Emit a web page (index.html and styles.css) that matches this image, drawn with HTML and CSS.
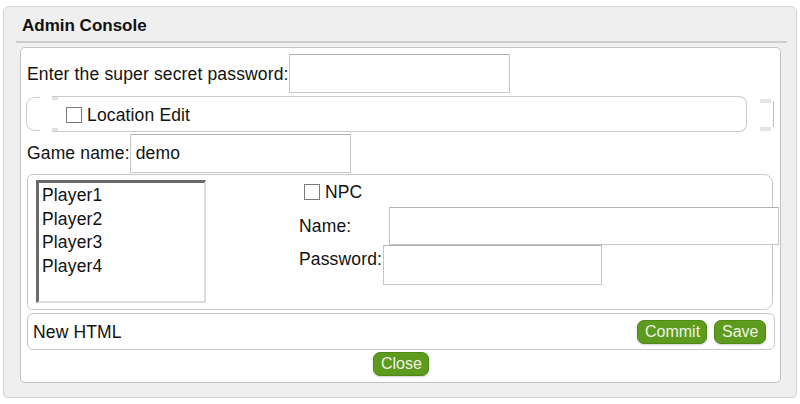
FILE: index.html
```html
<!DOCTYPE html>
<html>
<head>
<meta charset="utf-8">
<link rel="stylesheet" href="styles.css">
</head>
<body>
<div class="panel">
  <div class="panel-head">Admin Console</div>
  <div class="panel-body">
    <div class="row row-pass">
      <span class="label">Enter the super secret password:</span>
      <input class="field field-pass" type="password">
    </div>
    <div class="row row-loc">
      <div class="loc-bracket"></div>
      <div class="loc-box">
        <input class="check" type="checkbox">
        <span class="label">Location Edit</span>
      </div>
      <div class="loc-tail"></div>
    </div>
    <div class="row row-game">
      <span class="label">Game name:</span>
      <input class="field field-game" type="text" value="demo">
    </div>
    <div class="players">
      <div class="listbox">
        <div class="item">Player1</div>
        <div class="item">Player2</div>
        <div class="item">Player3</div>
        <div class="item">Player4</div>
      </div>
      <div class="player-form">
        <div class="npc-row">
          <input class="check" type="checkbox">
          <span class="label">NPC</span>
        </div>
        <div class="form-row form-name">
          <span class="label">Name:</span>
          <input class="field field-name" type="text">
        </div>
        <div class="form-row form-pw">
          <span class="label">Password:</span>
          <input class="field field-pw" type="password">
        </div>
      </div>
    </div>
    <div class="html-bar">
      <span class="label">New HTML</span>
      <div class="bar-buttons">
        <button class="btn btn-commit">Commit</button>
        <button class="btn btn-save">Save</button>
      </div>
    </div>
    <div class="close-row">
      <button class="btn btn-close">Close</button>
    </div>
  </div>
</div>
</body>
</html>
```

FILE: styles.css
```css
* { box-sizing: border-box; }

html, body {
  margin: 0;
  padding: 0;
  background: #ffffff;
}

body {
  font-family: "Liberation Sans", Arial, sans-serif;
  font-size: 17.5px;
  letter-spacing: 0.15px;
  color: #111;
}

.panel {
  margin: 6px 3px 0 3px;
  width: 794px;
  height: 392px;
  background: #efefef;
  border: 1px solid #d4d4d4;
  border-radius: 6px;
  box-shadow: 0 2px 2px rgba(0,0,0,0.06);
  display: flex;
  flex-direction: column;
}

.panel-head {
  margin: 0 9px 0 12px;
  height: 36px;
  padding: 9px 0 0 6px;
  font-weight: bold;
  font-size: 17px;
  letter-spacing: 0;
  color: #111;
  border-bottom: 2px solid #cdcdcd;
}

.panel-body {
  margin: 4px 15px 0 16px;
  height: 336px;
  background: #fff;
  border: 1px solid #c3c3c3;
  border-radius: 5px;
  display: flex;
  flex-direction: column;
  padding-bottom: 5px;
}

.row {
  display: flex;
  align-items: center;
}

.label {
  white-space: nowrap;
  line-height: 20px;
}

.field {
  font-family: "Liberation Sans", Arial, sans-serif;
  font-size: 17.5px;
  letter-spacing: 0.15px;
  color: #111;
  background: #fff;
  border: 1px solid #c6c6c6;
  border-top-color: #b0b0b0;
  border-radius: 0;
  padding: 0 5px;
  margin: 0;
  outline: none;
  flex-shrink: 0;
}

.row-pass {
  margin-top: 6px;
  padding-left: 6px;
  height: 39px;
}

.field-pass {
  width: 221px;
  height: 39px;
}

/* Location edit (broken fieldset look) */
.row-loc {
  margin-top: 2px;
  height: 37px;
  margin-left: 5px;
}

.loc-bracket {
  flex-shrink: 0;
  width: 14px;
  height: 34px;
  border: 1px solid #c9c9c9;
  border-right: none;
  border-radius: 9px 0 0 9px;
}

.loc-box {
  position: relative;
  flex-shrink: 0;
  margin-left: 12px;
  width: 695px;
  height: 36px;
  border: 1px solid #c9c9c9;
  border-left: none;
  border-radius: 0 8px 8px 0;
  display: flex;
  align-items: center;
  padding: 3px 0 0 14px;
}

.loc-box::before,
.loc-box::after {
  content: "";
  position: absolute;
  left: 0;
  width: 6px;
  height: 3px;
  background: #e2e2e2;
}
.loc-box::before { top: 0; }
.loc-box::after { bottom: 0; }

.loc-tail {
  position: relative;
  flex-shrink: 0;
  margin-left: 13px;
  width: 14px;
  height: 26px;
  border-right: 1px solid #bdbdbd;
}
.loc-tail::before,
.loc-tail::after {
  content: "";
  position: absolute;
  left: 0;
  width: 11px;
  height: 4px;
  background: #e4e4e4;
}
.loc-tail::before { top: -2px; }
.loc-tail::after { bottom: -4px; }

.check {
  -webkit-appearance: none;
  appearance: none;
  flex-shrink: 0;
  width: 16px;
  height: 16px;
  margin: 0 5px 0 0;
  border: 1px solid #7a7a7a;
  background: #fff;
  border-radius: 0;
}

.row-game {
  margin-top: 2px;
  padding-left: 6px;
  height: 38px;
}

.field-game {
  width: 221px;
  height: 39px;
}

/* Players */
.players {
  margin: 2px 0 0 6px;
  width: 746px;
  height: 136px;
  border: 1px solid #c9c9c9;
  border-radius: 5px 9px 9px 5px;
  display: flex;
  padding: 5px 0 0 8px;
}

.listbox {
  flex-shrink: 0;
  width: 170px;
  height: 123px;
  border-top: 3px solid #6a6a6a;
  border-left: 3px solid #6a6a6a;
  border-right: 2px solid #dcdcdc;
  border-bottom: 2px solid #dcdcdc;
  padding: 1px 0 0 3px;
}

.item {
  line-height: 23.7px;
  height: 23.7px;
}

.player-form {
  flex-shrink: 0;
  margin-left: 93px;
  padding-top: 4px;
  display: flex;
  flex-direction: column;
}

.npc-row {
  display: flex;
  align-items: center;
  padding-left: 5px;
  height: 16px;
}

.form-row {
  display: flex;
  align-items: center;
}

.form-name {
  margin-top: 7px;
  height: 38px;
}

.field-name {
  margin-left: 38px;
  width: 390px;
  height: 38px;
}

.form-pw {
  height: 40px;
  align-items: flex-start;
}

.form-pw .label { margin-top: 4px; }

.field-pw {
  margin-left: 1px;
  width: 219px;
  height: 40px;
}

/* HTML bar */
.html-bar {
  margin: 3px 0 0 6px;
  width: 748px;
  height: 37px;
  border: 1px solid #c9c9c9;
  border-radius: 6px;
  display: flex;
  align-items: center;
  justify-content: space-between;
  padding: 0 8px 0 5px;
}

.bar-buttons {
  display: flex;
  gap: 7px;
}

.btn {
  font-family: "Liberation Sans", Arial, sans-serif;
  font-size: 16px;
  letter-spacing: 0;
  color: #eef4e6;
  background: #5c9b1d;
  border: 1px solid #4e8916;
  border-radius: 7px;
  height: 24px;
  padding: 0 7px;
  line-height: 22px;
  box-shadow: 0 1px 2px rgba(0,0,0,0.18);
  cursor: pointer;
}

.btn-commit { width: 70px; }
.btn-save { width: 52px; }

.close-row {
  margin-top: 2px;
  display: flex;
  justify-content: center;
}

.btn-close {
  width: 56px;
  margin-left: 1px;
}
```
